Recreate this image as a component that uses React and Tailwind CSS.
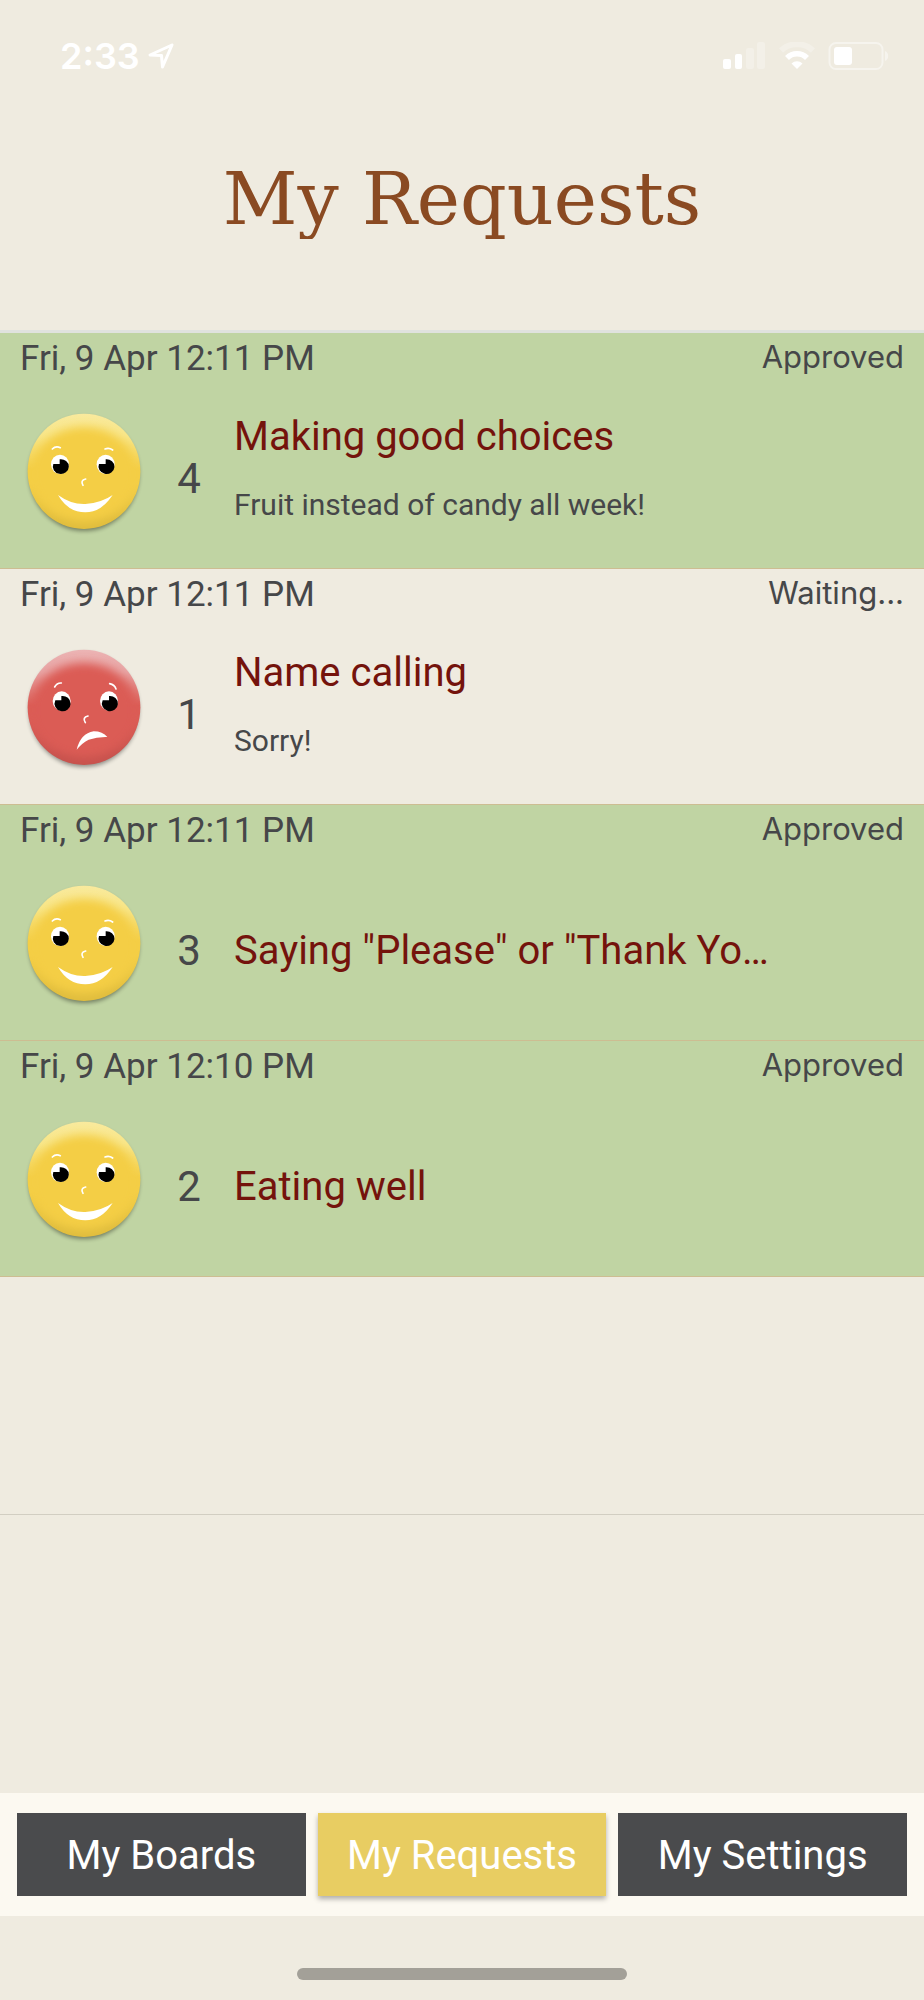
import clsx from 'clsx';

const requests = [
  { id: 1, date: 'Fri, 9 Apr 12:11 PM', status: 'Approved', points: 4, title: 'Making good choices', note: 'Fruit instead of candy all week!', mood: 'happy' },
  { id: 2, date: 'Fri, 9 Apr 12:11 PM', status: 'Waiting...', points: 1, title: 'Name calling', note: 'Sorry!', mood: 'sad' },
  { id: 3, date: 'Fri, 9 Apr 12:11 PM', status: 'Approved', points: 3, title: 'Saying "Please" or "Thank You"', mood: 'happy' },
  { id: 4, date: 'Fri, 9 Apr 12:10 PM', status: 'Approved', points: 2, title: 'Eating well', mood: 'happy' },
];

const tabs = ['My Boards', 'My Requests', 'My Settings'];

const StatusBar = () => (
  <div className="flex justify-between items-center h-28 pl-[60px] pr-[34px] text-white">
    <div className="flex items-center gap-2">
      <span className="font-['Inter',sans-serif] font-semibold text-[36px] leading-none">2:33</span>
      <svg width="26" height="26" viewBox="0 0 26 26" fill="none" stroke="currentColor" strokeWidth="3" strokeLinejoin="round">
        <path d="M24 2 L2 12 L13.500 12.500 L14.500 24 Z" />
      </svg>
    </div>
    <div className="flex items-center gap-3">
      <svg width="43" height="28" viewBox="0 0 43 28" fill="currentColor">
        <rect x="0" y="17" width="8" height="10" rx="2" />
        <rect x="12" y="12" width="7" height="15" rx="2" />
        <rect x="23" y="6" width="8" height="21" rx="2" opacity="0.25" />
        <rect x="34" y="0" width="8" height="27" rx="2" opacity="0.25" />
      </svg>
      <svg width="38" height="28" viewBox="0 0 38 28" fill="none" stroke="currentColor">
        <path d="M3 8.500 A23.500 23.500 0 0 1 35 8.500" strokeWidth="6" opacity="0.25" />
        <path d="M9 16 A14 14 0 0 1 29 16" strokeWidth="5.500" />
        <path d="M19 27 L13.500 21.500 A8 8 0 0 1 24.500 21.500 Z" fill="currentColor" stroke="none" />
      </svg>
      <svg width="62" height="28" viewBox="0 0 62 28" fill="none">
        <rect x="1.500" y="1" width="53" height="26" rx="6.500" stroke="currentColor" strokeWidth="2" opacity="0.45" />
        <rect x="6" y="5" width="18" height="18" rx="3" fill="currentColor" />
        <path d="M57 9 a5.500 5.500 0 0 1 0 10 Z" fill="currentColor" opacity="0.45" />
      </svg>
    </div>
  </div>
);

const HappyFeatures = () => (
  <>
    <g fill="none" stroke="white" strokeWidth="5" strokeLinecap="round">
      <path d="M127 150 Q137 140 151 146" />
      <path d="M285 150 Q297 145 308 153" />
      <path d="M227 240 Q210 244 219 259" />
    </g>
    <ellipse cx="150" cy="196" rx="27" ry="29" fill="white" />
    <path d="M149 181 A24 22 0 1 1 130 195 H149 Z" />
    <ellipse cx="287" cy="196" rx="27" ry="29" fill="white" />
    <path d="M287 181 A24 22 0 1 1 267 195 H287 Z" />
    <path d="M144 288 Q184 317 226 315 Q276 311 308 288 Q274 340 226 340 Q174 340 144 288 Z" fill="white" />
  </>
);

const SadFeatures = () => (
  <>
    <g fill="none" stroke="white" strokeWidth="5" strokeLinecap="round">
      <path d="M134 156 Q141 143 154 144" />
      <path d="M299 146 Q314 149 318 162" />
      <path d="M234 243 Q216 247 226 263" />
    </g>
    <ellipse cx="155" cy="198" rx="27" ry="29" fill="white" />
    <path d="M154 183 A24 23 0 1 1 136 196 H154 Z" />
    <ellipse cx="297" cy="198" rx="27" ry="29" fill="white" />
    <path d="M297 183 A24 23 0 1 1 278 196 H297 Z" />
    <path d="M200 344 Q212 295 251 289 Q278 289 292 306 Q262 305 236 314 Q217 323 200 344 Z" fill="white" />
  </>
);

const Face = ({ mood }) => {
  const happy = mood === 'happy';
  const id = `face-${mood}`;
  const base = happy ? '#f4ce45' : '#db5c55';
  return (
    <svg className="shrink-0" width="120" height="130" viewBox="42 39 360 390" role="img" aria-label={mood}>
      <defs>
        <clipPath id={`${id}-clip`}>
          <ellipse cx="222" cy="217" rx="169" ry="173" />
        </clipPath>
        <linearGradient id={`${id}-rim`} x1="0" y1="0" x2="0" y2="1">
          <stop offset="0" stopColor={happy ? '#f9ea9f' : '#ecb5b5'} />
          <stop offset="0.2" stopColor={happy ? '#f8e689' : '#e8a5a5'} />
          <stop offset="0.48" stopColor={base} />
          <stop offset="0.6" stopColor={base} />
          <stop offset="0.9" stopColor={happy ? '#e0bd3d' : '#c7524d'} />
        </linearGradient>
        <filter id={`${id}-soft`} x="-30%" y="-30%" width="160%" height="160%">
          <feGaussianBlur stdDeviation="15" />
        </filter>
        <filter id={`${id}-shadow`} x="-30%" y="-30%" width="160%" height="160%">
          <feGaussianBlur stdDeviation="7" />
        </filter>
      </defs>
      <ellipse cx="222" cy="225" rx="165" ry="171" fill="black" opacity="0.4" filter={`url(#${id}-shadow)`} />
      <g clipPath={`url(#${id}-clip)`}>
        <rect x="42" y="39" width="360" height="360" fill={`url(#${id}-rim)`} />
        <ellipse cx="222" cy="226" rx="158" ry="142" fill={base} filter={`url(#${id}-soft)`} />
      </g>
      {happy ? <HappyFeatures /> : <SadFeatures />}
    </svg>
  );
};

const RequestRow = ({ request }) => (
  <li
    className={clsx(
      'flex flex-col min-h-[236px] border-b border-[#cdbd92]',
      request.status === 'Approved' && 'bg-[#c0d4a3]'
    )}
  >
    <div className="flex justify-between px-5 pt-1">
      <time className="text-[35px] leading-[44px]">{request.date}</time>
      <span className="font-['Inter',sans-serif] text-[31px] leading-[40px]">{request.status}</span>
    </div>
    <div className="flex flex-1 items-center pt-1 pl-6">
      <Face mood={request.mood} />
      <span className="w-[90px] pt-1 text-center text-[42px] leading-[48px]">{request.points}</span>
      <div className={clsx('flex-1 min-w-0 pr-[154px]', request.note ? 'pb-3' : 'pt-1')}>
        <h2 className="truncate text-[40px] leading-[64px] text-[#74130c]">{request.title}</h2>
        {request.note && <p className="truncate pt-1 text-[30px] leading-[64px]">{request.note}</p>}
      </div>
    </div>
  </li>
);

const TabBar = ({ active }) => (
  <nav className="grid grid-cols-3 gap-3 bg-[#fcf9f1] px-[17px] py-5">
    {tabs.map((tab) => (
      <button
        key={tab}
        type="button"
        className={clsx(
          'h-[83px] pt-0.5 text-[40px] text-white',
          tab === active
            ? 'bg-[#e8cd62] shadow-[0_3px_5px_rgba(0,0,0,0.3)]'
            : 'bg-[#4a4b4d]'
        )}
      >
        {tab}
      </button>
    ))}
  </nav>
);

export default function App() {
  return (
    <div className="flex flex-col min-h-screen bg-[#efebe0] font-['Roboto',sans-serif] text-[#464749]">
      <StatusBar />
      <header className="h-[218px]">
        <h1 className="h-[127px] overflow-hidden pt-9 text-center font-['Roboto_Slab','DejaVu_Serif',serif] text-[73px] leading-[102px] text-[#8a4a22]">
          My Requests
        </h1>
      </header>

      <main className="flex-1">
        <ul className="border-t-3 border-[#e0e2de]">
          {requests.map((request) => (
            <RequestRow key={request.id} request={request} />
          ))}
          {/* Empty slot below the last request */}
          <li className="h-[238px] border-b border-[#d2cec2]" />
        </ul>
      </main>

      <TabBar active="My Requests" />
      <div className="flex justify-center pt-[52px] pb-5">
        <div className="h-3 w-[330px] rounded-full bg-[#a3a098]" />
      </div>
    </div>
  );
}
